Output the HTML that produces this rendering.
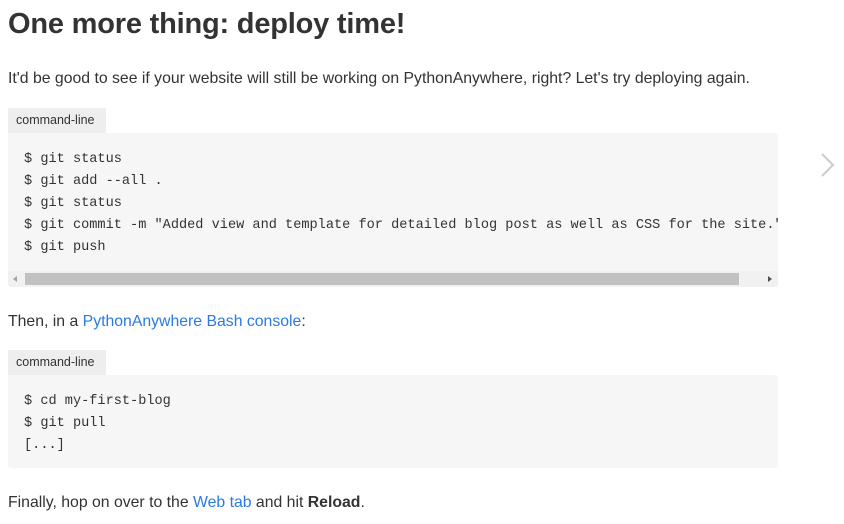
<!DOCTYPE html>
<html><head><style>
body{margin:0;width:844px;height:524px;background:#fff;font-family:"Liberation Sans",sans-serif;color:#333;position:relative;overflow:hidden}
.a{position:absolute;white-space:nowrap}
h1{position:absolute;left:8px;top:8px;margin:0;font-size:29px;font-weight:bold;color:#333;letter-spacing:-0.2px}
p{margin:0;font-size:15.8px;color:#333;font-weight:300}
a{color:#2a7ae2;text-decoration:none}
.lbl{position:absolute;left:8px;background:#eee;font-size:12.5px;color:#333;height:25px;line-height:25px;padding:0 8px;width:82px}
.code{position:absolute;left:8px;width:770px;background:#f6f6f6;font-family:"Liberation Mono",monospace;font-size:13.6px;line-height:22px;color:#333;border-radius:0 3px 3px 3px;overflow:hidden}
.code pre{margin:0;padding:16px 16px 14px;font:inherit;white-space:pre}
</style></head><body>
<h1>One more thing: deploy time!</h1>
<p class="a" style="left:8px;top:70px">It'd be good to see if your website will still be working on PythonAnywhere, right? Let's try deploying again.</p>
<div class="lbl" style="top:108px">command-line</div>
<div class="code" style="top:133px;height:154px">
<pre>$ git status
$ git add --all .
$ git status
$ git commit -m "Added view and template for detailed blog post as well as CSS for the site."
$ git push</pre>
<div style="position:absolute;left:0;top:138px;width:770px;height:16px;background:#f1f1f1"></div>
<div style="position:absolute;left:17px;top:140px;width:714px;height:12px;background:#c1c1c1"></div>
<div style="position:absolute;left:5px;top:143px;width:0;height:0;border-top:3px solid transparent;border-bottom:3px solid transparent;border-right:4px solid #a3a3a3"></div>
<div style="position:absolute;left:760px;top:143px;width:0;height:0;border-top:3px solid transparent;border-bottom:3px solid transparent;border-left:4px solid #505050"></div>
</div>
<svg class="a" style="left:818px;top:151px" width="20" height="28"><path d="M4 3 L15 14 L4 25" fill="none" stroke="#ccc" stroke-width="2"/></svg>
<p class="a" style="left:8px;top:313px">Then, in a <a>PythonAnywhere Bash console</a>:</p>
<div class="lbl" style="top:350px">command-line</div>
<div class="code" style="top:375px;height:93px">
<pre>$ cd my-first-blog
$ git pull
[...]</pre>
</div>
<p class="a" style="left:8px;top:494px">Finally, hop on over to the <a>Web tab</a> and hit <b style="font-weight:bold">Reload</b>.</p>
</body></html>
